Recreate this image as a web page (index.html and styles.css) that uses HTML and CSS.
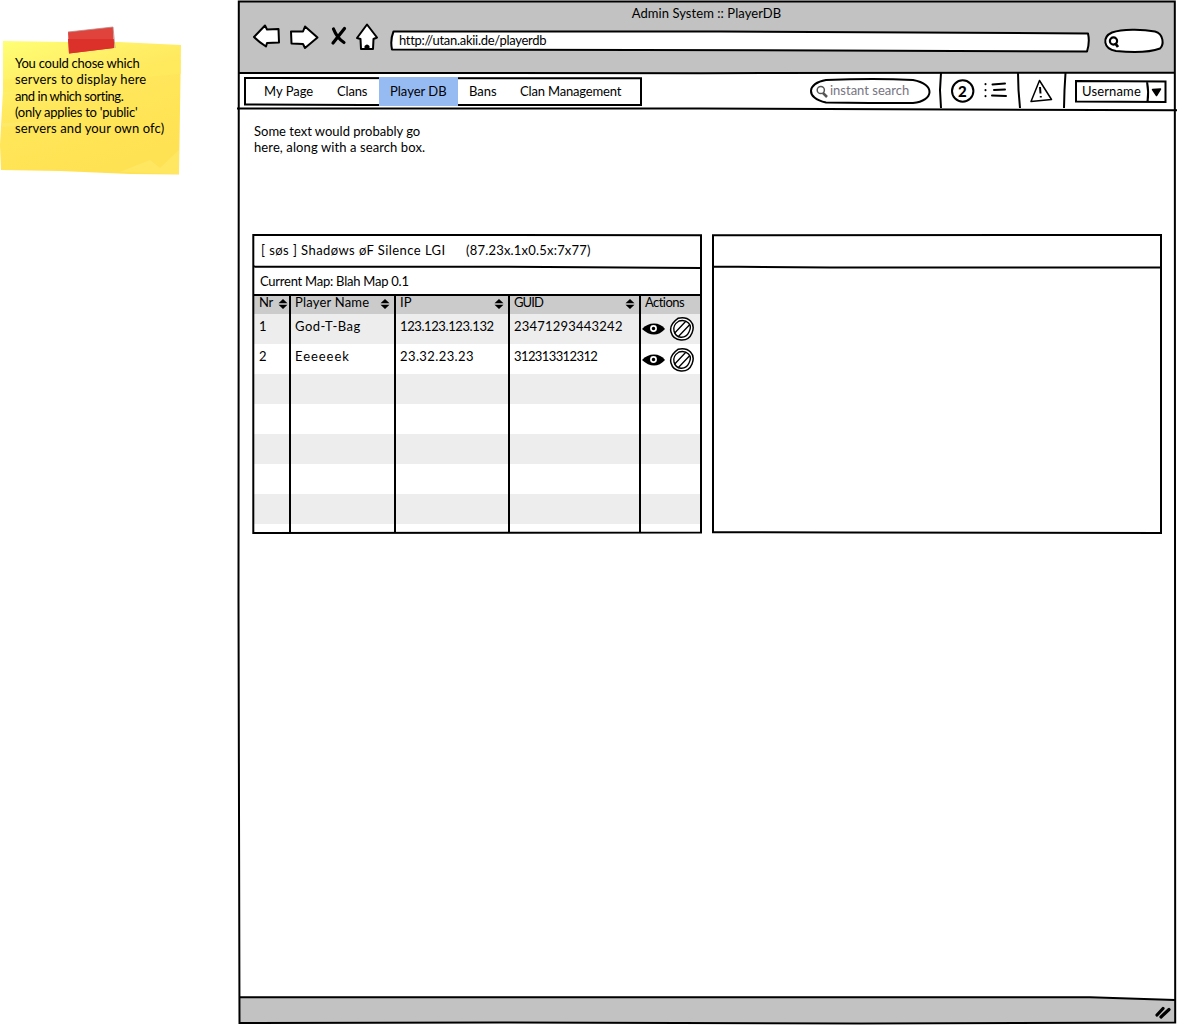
FILE: index.html
```html
<!DOCTYPE html>
<html lang="en">
<head>
<meta charset="utf-8">
<title>Admin System :: PlayerDB</title>
<link rel="stylesheet" href="styles.css">
</head>
<body>
<aside class="side">
  <div class="note">
    <svg class="sketch" width="190" height="156" viewBox="0 20 190 156">
      <defs>
        <linearGradient id="paper" x1="0" y1="0" x2="0.45" y2="1">
          <stop offset="0" stop-color="#ffff75"/><stop offset=".3" stop-color="#fff068"/>
          <stop offset=".55" stop-color="#ffe65a"/><stop offset="1" stop-color="#ffe253"/>
        </linearGradient>
      </defs>
      <path d="M3 41L66 42L119 42L181 45L180 110L179 174.500L130 174L60 171L1 170L0 145L3 90Z" fill="url(#paper)"/>
      <path d="M3 92L60 88L120 80L181 74L181 60L90 70L3 80Z" fill="#ffec5e" opacity=".5"/>
      <path d="M2 123L70 120L2 127ZM120 172L150 160L160 168L179 150L179 174Z" fill="#fff07a" opacity=".4"/>
      <path d="M68 32L113 27L114 48L69 53.500Z" fill="#e0433c"/>
      <path d="M68 39L114 39L114 48L69 53.500Z" fill="#dc302b"/>
      <path d="M68 32L113 27L115 48" fill="none" stroke="#b98a86" stroke-width=".8"/>
    </svg>
    <p class="note-text"><span class="n1">You could chose which</span><br><span class="n2">servers to display here</span><br><span class="n3">and in which sorting.</span><br><span class="n4">(only applies to 'public'</span><br><span class="n5">servers and your own ofc)</span></p>
  </div>
</aside>
<main class="window">
  <header class="chrome">
    <svg class="sketch" width="939" height="74" viewBox="238 0 939 74">
      <path d="M239 1.500H1175V73H239Z" fill="#c2c2c2"/>
      <g fill="#fff" stroke="#000" stroke-width="2" stroke-linejoin="round">
        <path d="M254 37L265 25.500L267 29.500L278.500 29L279 42.500L267 43L266 46.500Q259 42 254 37Z"/>
        <path d="M291 31.500L303 31.500L305 26.500L317.500 37.500L305 48L303 44L291.500 43.500Z"/>
        <path d="M367 24.500L377 37.500L373.500 39L373 49H361L360.500 39L357 38Z"/>
        <path d="M393.500 31.500L720 31.500L1088 33.500Q1090 42 1087 51.500L830 50.500L392 49.500Q390 40 393.500 31.500Z"/>
        <path d="M1112 32.500C1122 29 1142 29 1155 31.500C1164 34 1164 45 1160 48.500C1148 53 1127 52 1116 51C1103 49 1102 37 1112 32.500Z"/>
      </g>
      <path d="M364.500 49V46Q367 43 369.500 46V49Z"/>
      <path d="M344.500 28.500L333 43M333.500 29Q337 38 344 42.500" fill="none" stroke="#000" stroke-width="3.200" stroke-linecap="round"/>
      <circle cx="1113.500" cy="41" r="3.600" fill="none" stroke="#000" stroke-width="2.200"/>
      <path d="M1115 43L1118 47" stroke="#000" stroke-width="2.800"/>
    </svg>
    <h1 class="title">Admin System :: PlayerDB</h1>
    <div class="url">http://utan.akii.de/playerdb</div>
  </header>

  <div class="toolbar">
    <svg class="sketch" width="939" height="38" viewBox="238 73 939 38">
      <g fill="none" stroke="#000" stroke-width="2">
        <path d="M245 78L641 78.200V105L362 105L245 104.500Z"/>
        <path d="M941 73L940 90L941 108M1018 73L1018.500 90L1020 108M1065.500 73L1064.500 90L1064 108"/>
        <path d="M826 80Q875 78 913 80C936 84 934 101 913 103Q870 103 826 102.500C805 98 807 83 826 80Z"/>
        <path d="M1076 81L1165.500 81.500V102L1076 101.500ZM1147 81.500Q1149 92 1147.500 102"/>
      </g>
      <path d="M1152.500 89.500L1160.500 89L1156.500 95.500Z" stroke="#000" stroke-width="1.500" stroke-linejoin="round"/>
      <g fill="none" stroke="#555">
        <circle cx="820.800" cy="90" r="3.600" stroke-width="1.500"/>
        <path d="M823 93L827 97" stroke-width="2.500"/>
      </g>
      <circle cx="962.700" cy="91" r="10.700" fill="none" stroke="#000" stroke-width="2"/>
      <g fill="none" stroke="#000" stroke-width="2" stroke-linecap="round">
        <path d="M985.500 84V84.200M985.500 90V90.200M985.500 96V96.200"/>
        <path d="M992.500 84.500L1005 83.500M994 90L1005 89.500M992 95.500L1006 96"/>
      </g>
      <g fill="none" stroke="#000" stroke-width="1.500" stroke-linejoin="round">
        <path d="M1039.500 80.500L1031 101.500L1051.500 99.500Z"/>
        <path d="M1040 87L1040.500 93.500M1040.800 96V97.500" stroke-width="2"/>
      </g>
    </svg>
    <nav class="menu">
      <a class="m-page">My Page</a><a class="m-clans">Clans</a><a class="m-player active">Player DB</a><a class="m-bans">Bans</a><a class="m-manage">Clan Management</a>
    </nav>
    <div class="search">instant search</div>
    <div class="count">2</div>
    <div class="user">Username</div>
  </div>

  <section class="content">
    <p class="intro"><span class="i1">Some text would probably go</span><br><span class="i2">here, along with a search box.</span></p>
    <div class="panels">
      <article class="panel">
        <h2 class="server"><span class="server-name">[ søs ] Shadøws øF Silence LGI</span><span class="server-ip">(87.23x.1x0.5x:7x77)</span></h2>
        <div class="map">Current Map: Blah Map 0.1</div>
        <div class="grid">
          <div class="row head">
            <div class="cell"><span class="h-nr">Nr</span><svg class="sort" viewBox="0 0 10 10"><path d="M5 0L9.500 4.300H.5ZM.5 5.700H9.500L5 10Z"/></svg></div>
            <div class="cell"><span class="h-name">Player Name</span><svg class="sort" viewBox="0 0 10 10"><path d="M5 0L9.500 4.300H.5ZM.5 5.700H9.500L5 10Z"/></svg></div>
            <div class="cell"><span>IP</span><svg class="sort" viewBox="0 0 10 10"><path d="M5 0L9.500 4.300H.5ZM.5 5.700H9.500L5 10Z"/></svg></div>
            <div class="cell"><span class="h-guid">GUID</span><svg class="sort" viewBox="0 0 10 10"><path d="M5 0L9.500 4.300H.5ZM.5 5.700H9.500L5 10Z"/></svg></div>
            <div class="cell"><span class="h-act">Actions</span></div>
          </div>
          <div class="row shade">
            <div class="cell">1</div><div class="cell c-god">God-T-Bag</div><div class="cell c-ip1">123.123.123.132</div><div class="cell c-g1">23471293443242</div>
            <div class="cell actions"><svg width="54" height="26" viewBox="0 0 54 26"><use href="#acts"/></svg></div>
          </div>
          <div class="row">
            <div class="cell">2</div><div class="cell c-eek">Eeeeeek</div><div class="cell c-ip2">23.32.23.23</div><div class="cell c-g2">312313312312</div>
            <div class="cell actions low"><svg width="54" height="26" viewBox="0 0 54 26"><use href="#acts"/></svg></div>
          </div>
          <div class="row shade"></div><div class="row"></div><div class="row shade"></div><div class="row"></div><div class="row shade"></div>
        </div>
        <svg class="sketch" width="450" height="300" viewBox="252 234 450 300">
          <defs>
            <g id="acts">
              <path d="M1 13Q6 7.500 13 7.500T24 13Q19 18.500 13 18.500T1 13Z"/>
              <circle cx="12.500" cy="12.500" r="2.600" fill="#000" stroke="#fff" stroke-width="1.700"/>
              <path d="M37 2.300Q45 .5 49.500 5T51 17Q48 24.500 40 24T30 16T37 2.300Z" fill="#fff" stroke="#000" stroke-width="1.500"/>
              <path d="M38 5Q44 3.500 47.500 7T48 16Q45.500 21.500 40 21.200T33 15T38 5Z" fill="#fff" stroke="#000" stroke-width="1.400"/>
              <path d="M33.500 17.300L44.800 5.300M37.200 20.800L48.600 8.700" fill="none" stroke="#000" stroke-width="1.300"/>
            </g>
          </defs>
          <g fill="none" stroke="#000" stroke-width="2">
            <path d="M253.300 235L701 235.200V532.500L253.300 533ZM253 266.500L500 266.800L701 268M253 295H701"/>
            <path d="M290 296V532M395 296V532M509 296V532M640 296V532"/>
          </g>
        </svg>
      </article>
      <article class="panel">
        <svg class="sketch" width="450" height="300" viewBox="712 234 450 300">
          <path d="M713 235.200L1161 235V533L845 532.500L713 532.200ZM713 266.500L830 267.500L1161 267.500" fill="none" stroke="#000" stroke-width="2"/>
        </svg>
      </article>
    </div>
  </section>

  <footer class="status">
    <svg class="sketch" width="939" height="29" viewBox="238 996 939 29">
      <path d="M239 997.500L1050 997L1175 1000V1022.500L240 1023Z" fill="#c2c2c2"/>
      <path d="M239 997.300L1090 997.300L1175 1000" fill="none" stroke="#000" stroke-width="2"/>
      <path d="M1157 1015L1163 1008.500M1161 1017L1169 1009.500" stroke="#000" stroke-width="3.200" stroke-linecap="round"/>
    </svg>
  </footer>
  <svg class="sketch" width="939" height="1025" viewBox="238 0 939 1025">
    <path d="M238.800 1.500H1174.800L1175 500L1175.200 1022.500L860 1023.500L500 1022.500L239.500 1023L238.500 600ZM238 73L700 73.200L1175 72.500M237 108.500L700 108.500L1177 110.200" fill="none" stroke="#000" stroke-width="2"/>
  </svg>
</main>
</body>
</html>
```
FILE: styles.css
```css
* { box-sizing: border-box; }

body {
  margin: 0;
  display: flex;
  width: 1177px;
  height: 1025px;
  overflow: hidden;
  background: #fff;
  color: #000;
  font: 13px/16px Lato, "Open Sans", sans-serif;
  font-variant-ligatures: none;
}

h1, h2, p { margin: 0; font: inherit; font-variant-ligatures: none; }

/* hand-drawn outlines laid over the flow content */
.sketch {
  position: absolute;
  left: 0;
  top: 0;
  overflow: visible;
  pointer-events: none;
}

.side { flex: none; width: 238px; padding-top: 20px; }
.note { position: relative; width: 190px; height: 156px; padding: 35px 0 0 15px; }
.note-text { position: relative; line-height: 16.25px; white-space: nowrap; }
.n1 { letter-spacing: -.24px; }
.n2 { letter-spacing: .17px; }
.n3 { letter-spacing: -.45px; }
.n4 { letter-spacing: -.24px; }
.n5 { letter-spacing: .12px; }

.window {
  position: relative;
  flex: none;
  width: 939px;
  display: grid;
  grid-template-rows: 73px 37px 886px 29px;
  white-space: nowrap;
}

.chrome { position: relative; padding-top: 5px; }
.title { position: relative; width: 937px; text-align: center; letter-spacing: .06px; }
.url { position: relative; margin: 11px 0 0 161px; letter-spacing: -.29px; }

.toolbar { position: relative; display: flex; }
.menu { display: flex; position: relative; z-index: 1; margin: 4px 0 0 7px; width: 396px; height: 29px; }
.menu a { padding: 6px 0 0 12px; }
.menu .m-page { width: 80px; padding-left: 19px; }
.menu .m-clans { width: 54px; letter-spacing: -.15px; }
.menu .m-player { width: 79px; padding-left: 11px; }
.menu .m-bans { width: 51px; padding-left: 11px; }
.menu .m-manage { padding-left: 11px; letter-spacing: -.17px; }
.menu .active { background: #96bbf3; }
.search { position: relative; margin: 9px 0 0 189px; width: 122px; color: #77747f; }
.count { position: relative; margin: 10px 0 0 6px; width: 12px; font-weight: 900; font-size: 15px; }
.user { position: relative; margin: 10px 0 0 112px; letter-spacing: .15px; }

.content { padding: 13px 0 0 14px; }
.intro { padding-left: 2px; height: 111px; }
.i2 { letter-spacing: .1px; }
.panels { display: flex; gap: 10px; }
.panel { position: relative; width: 450px; height: 300px; }
.server { display: flex; height: 33px; padding: 8px 0 0 9px; }
.server-name { width: 205px; letter-spacing: .44px; }
.server-ip { letter-spacing: .2px; }
.map { height: 28px; padding: 6px 0 0 8px; letter-spacing: -.24px; }

.row { display: grid; grid-template-columns: 36px 105px 114px 131px 61px; width: 447px; height: 30px; margin-left: 1px; }
.row .cell { padding: 4px 0 0 6px; }
.row.head { height: 19px; background: #cbcbcb; }
.head .cell { display: flex; justify-content: space-between; padding: 0 4px 0 6px; margin-top: -1px; }
.shade { background: #ededed; }
.sort { width: 10px; height: 10px; margin-top: 5px; }
.head .cell:first-child .sort { margin-right: -3px; }
.h-nr { letter-spacing: -.4px; }
.h-name { letter-spacing: .2px; }
.h-guid { letter-spacing: -.9px; }
.h-act { letter-spacing: -.55px; }
.c-god { letter-spacing: .5px; }
.c-eek { letter-spacing: .95px; }
.c-ip1 { letter-spacing: -.4px; }
.c-ip2 { letter-spacing: .4px; }
.c-g1 { letter-spacing: .22px; }
.c-g2 { letter-spacing: -.6px; }
.row .actions { padding: 2px 0 0 2px; }
.row .low { padding-top: 3px; }
.actions svg { display: block; }

.status { position: relative; }
```
